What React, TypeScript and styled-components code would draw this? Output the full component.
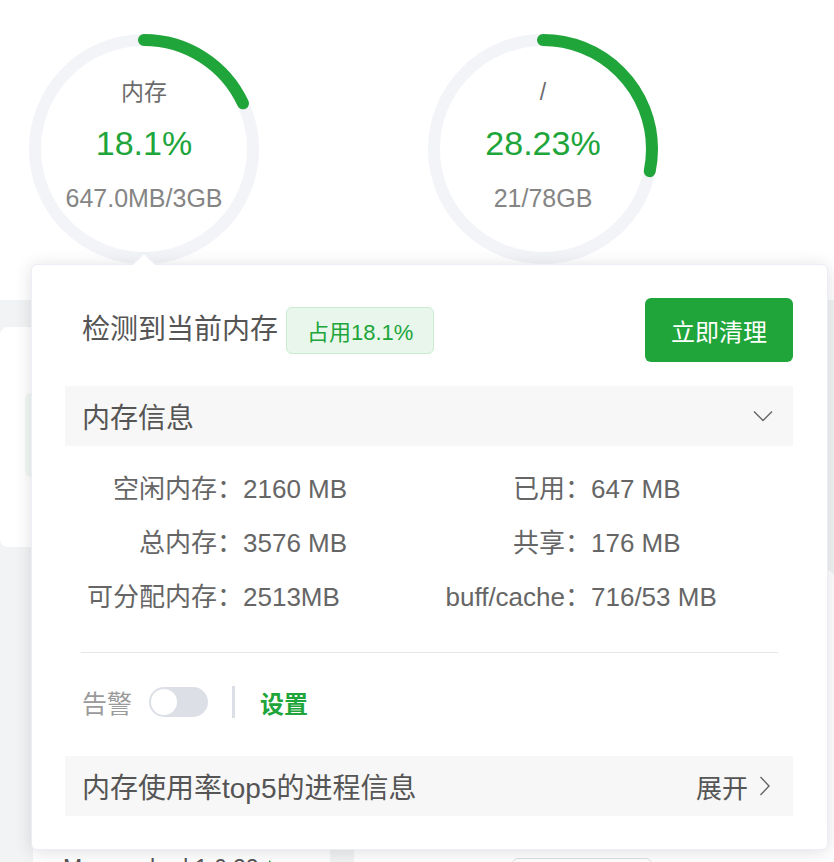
import React from 'react';
import styled, { createGlobalStyle } from 'styled-components';

const GREEN = '#20a53a';
const FONT = `"Liberation Sans", "Noto Sans CJK SC", "Noto Sans", sans-serif`;

const Global = createGlobalStyle`
  html, body { margin: 0; padding: 0; }
  body {
    background: #f2f3f5;
    font-family: ${FONT};
    width: 834px;
    height: 862px;
    overflow: hidden;
  }
`;

const Page = styled.div`
  position: relative;
  width: 834px;
  height: 862px;
  overflow: hidden;
  background: #f2f3f5;
`;

const TopPanel = styled.section`
  height: 300px;
  box-sizing: border-box;
  background: #fff;
  display: flex;
  gap: 169px;
  padding: 34px 0 0 29px;
`;

const Gauge = styled.div`
  width: 230px;
  height: 230px;
  display: grid;
  & > * {
    grid-area: 1 / 1;
  }
`;

const GaugeText = styled.div`
  display: flex;
  flex-direction: column;
  align-items: center;
  padding-top: 43px;
  box-sizing: border-box;
`;

const GaugeLabel = styled.div`
  font-size: 23px;
  line-height: 30px;
  color: #6b6b6b;
`;

const GaugeValue = styled.div`
  margin-top: 14px;
  font-size: 34px;
  line-height: 44px;
  color: ${GREEN};
`;

const GaugeSub = styled.div`
  margin-top: 18px;
  font-size: 25px;
  line-height: 30px;
  color: #858585;
`;

const Lower = styled.section`
  padding-top: 27px;
  display: flex;
  flex-direction: column;
  gap: 23px;
`;

const CardRow = styled.div<{ $left?: number; $gap: number }>`
  display: flex;
  gap: ${(p) => p.$gap}px;
  padding-left: ${(p) => p.$left ?? 0}px;
`;

const Card = styled.div<{ $w: number; $h: number }>`
  width: ${(p) => p.$w}px;
  height: ${(p) => p.$h}px;
  flex: none;
  background: #fff;
  border-radius: 8px;
  box-sizing: border-box;
`;

const Tile = styled.div`
  margin: 66px 0 0 25px;
  width: 200px;
  height: 84px;
  border-radius: 6px;
  background: #f2f9f4;
`;

const SoftName = styled.div`
  padding: 283px 0 0 30px;
  display: flex;
  align-items: center;
  gap: 10px;
  font-size: 23px;
  line-height: 30px;
  color: #555;
`;

const PlayMark = styled.span`
  width: 0;
  height: 0;
  border-left: 9px solid ${GREEN};
  border-top: 8px solid transparent;
  border-bottom: 8px solid transparent;
`;

const OutlineBtn = styled.div`
  margin: 288px 0 0 158px;
  width: 140px;
  height: 40px;
  border: 1px solid #dcdfe6;
  border-radius: 6px;
  box-sizing: border-box;
`;

const Popover = styled.div`
  position: absolute;
  left: 31px;
  top: 264px;
  width: 797px;
  box-sizing: border-box;
  background: #fff;
  border: 1px solid #ebeef5;
  border-radius: 6px;
  box-shadow: 0 2px 18px rgba(0, 0, 0, 0.13);
  padding: 33px 34px 33px 33px;
  display: flex;
  flex-direction: column;
`;

const Arrow = styled.div`
  position: absolute;
  left: 104px;
  top: -9px;
  width: 16px;
  height: 16px;
  box-sizing: border-box;
  background: #fff;
  border-top: 1px solid #ebeef5;
  border-left: 1px solid #ebeef5;
  transform: rotate(45deg);
`;

const HeaderRow = styled.div`
  display: flex;
  align-items: center;
  height: 64px;
  padding-left: 17px;
`;

const Title = styled.div`
  font-size: 28px;
  line-height: 36px;
  color: #555;
`;

const Badge = styled.div`
  margin-left: 8px;
  height: 47px;
  box-sizing: border-box;
  padding: 0 20px;
  display: flex;
  align-items: center;
  border: 1px solid #c9ebd2;
  background: #e8f6eb;
  border-radius: 6px;
  font-size: 22px;
  color: ${GREEN};
`;

const CleanButton = styled.button`
  margin-left: auto;
  width: 148px;
  height: 64px;
  border: none;
  border-radius: 6px;
  background: ${GREEN};
  color: #fff;
  font-family: ${FONT};
  font-size: 24px;
  padding: 0;
`;

const Bar = styled.div<{ $top: number; $pr: number }>`
  margin-top: ${(p) => p.$top}px;
  height: 60px;
  background: #f7f7f7;
  display: flex;
  align-items: center;
  justify-content: space-between;
  padding: 0 ${(p) => p.$pr}px 0 17px;
  font-size: 28px;
  color: #555;
`;

const Expand = styled.div`
  display: flex;
  align-items: center;
  gap: 11px;
  font-size: 26px;
  color: #555;
`;

const InfoGrid = styled.div`
  margin-top: 16px;
  display: grid;
  grid-template-columns: 178px 170px 178px 1fr;
  grid-auto-rows: 54px;
  align-items: center;
  font-size: 26px;
  line-height: 34px;
  color: #666;
  white-space: nowrap;
`;

const InfoLabel = styled.div`
  text-align: right;
`;

const InfoValue = styled.div``;

const Divider = styled.div`
  margin: 28px 15px 0 16px;
  height: 1px;
  background: #e6e6e6;
`;

const AlarmRow = styled.div`
  margin-top: 33px;
  height: 32px;
  display: flex;
  align-items: center;
  padding-left: 17px;
`;

const AlarmLabel = styled.span`
  font-size: 25px;
  color: #9a9a9a;
`;

const Switch = styled.div`
  margin-left: 17px;
  width: 59px;
  height: 30px;
  border-radius: 15px;
  background: #dcdfe6;
  display: flex;
  align-items: center;
  padding: 0 2px;
  box-sizing: border-box;
`;

const Knob = styled.div`
  width: 26px;
  height: 26px;
  border-radius: 50%;
  background: #fff;
`;

const VLine = styled.div`
  margin-left: 24px;
  width: 3px;
  height: 32px;
  background: #dcdfe6;
`;

const SetLink = styled.span`
  margin-left: 25px;
  font-size: 24px;
  font-weight: 600;
  color: ${GREEN};
`;

function Ring({ pct }: { pct: number }) {
  const r = 109;
  const c = 2 * Math.PI * r;
  return (
    <svg width="230" height="230" viewBox="0 0 230 230">
      <circle cx="115" cy="115" r={r} fill="none" stroke="#f3f4f8" strokeWidth="12" />
      <circle
        cx="115"
        cy="115"
        r={r}
        fill="none"
        stroke={GREEN}
        strokeWidth="12"
        strokeLinecap="round"
        strokeDasharray={`${(c * pct) / 100} ${c}`}
        transform="rotate(-90 115 115)"
      />
    </svg>
  );
}

const gauges = [
  { label: '内存', value: '18.1%', pct: 18.1, sub: '647.0MB/3GB' },
  { label: '/', value: '28.23%', pct: 28.23, sub: '21/78GB' },
];

const info: [string, string, string, string][] = [
  ['空闲内存：', '2160 MB', '已用：', '647 MB'],
  ['总内存：', '3576 MB', '共享：', '176 MB'],
  ['可分配内存：', '2513MB', 'buff/cache：', '716/53 MB'],
];

export default function App() {
  return (
    <Page>
      <Global />
      <TopPanel>
        {gauges.map((g) => (
          <Gauge key={g.label}>
            <Ring pct={g.pct} />
            <GaugeText>
              <GaugeLabel>{g.label}</GaugeLabel>
              <GaugeValue>{g.value}</GaugeValue>
              <GaugeSub>{g.sub}</GaugeSub>
            </GaugeText>
          </Gauge>
        ))}
      </TopPanel>
      <Lower>
        <CardRow $gap={12}>
          <Card $w={400} $h={220}>
            <Tile />
          </Card>
          <Card $w={408} $h={220} />
        </CardRow>
        <CardRow $left={33} $gap={24}>
          <Card $w={297} $h={400}>
            <SoftName>
              Memcached 1.6.22 <PlayMark />
            </SoftName>
          </Card>
          <Card $w={480} $h={400}>
            <OutlineBtn />
          </Card>
        </CardRow>
      </Lower>

      <Popover>
        <Arrow />
        <HeaderRow>
          <Title>检测到当前内存</Title>
          <Badge>占用18.1%</Badge>
          <CleanButton>立即清理</CleanButton>
        </HeaderRow>
        <Bar $top={24} $pr={20}>
          <span>内存信息</span>
          <svg width="20" height="12" viewBox="0 0 20 12">
            <path d="M1 1.5 L10 10.5 L19 1.5" fill="none" stroke="#666" strokeWidth="1.4" />
          </svg>
        </Bar>
        <InfoGrid>
          {info.map((row) => (
            <React.Fragment key={row[0]}>
              <InfoLabel>{row[0]}</InfoLabel>
              <InfoValue>{row[1]}</InfoValue>
              <InfoLabel>{row[2]}</InfoLabel>
              <InfoValue>{row[3]}</InfoValue>
            </React.Fragment>
          ))}
        </InfoGrid>
        <Divider />
        <AlarmRow>
          <AlarmLabel>告警</AlarmLabel>
          <Switch>
            <Knob />
          </Switch>
          <VLine />
          <SetLink>设置</SetLink>
        </AlarmRow>
        <Bar $top={38} $pr={23}>
          <span>内存使用率top5的进程信息</span>
          <Expand>
            <span>展开</span>
            <svg width="11" height="20" viewBox="0 0 11 20">
              <path d="M1.5 1 L10 10 L1.5 19" fill="none" stroke="#666" strokeWidth="1.4" />
            </svg>
          </Expand>
        </Bar>
      </Popover>
    </Page>
  );
}
